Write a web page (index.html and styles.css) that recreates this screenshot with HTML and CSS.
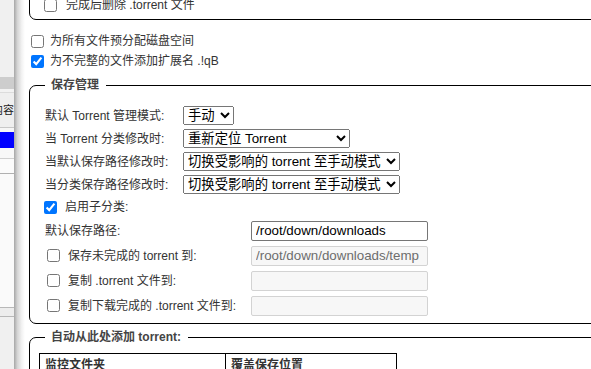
FILE: index.html
```html
<!DOCTYPE html>
<html lang="zh-CN">
<head>
<meta charset="utf-8">
<title>选项</title>
<link rel="stylesheet" href="styles.css">
</head>
<body>
<div class="page">
  <aside class="bgwin">
    <div class="bw-top"></div>
    <div class="bw-head"></div>
    <div class="bw-sep"></div>
    <div class="bw-cell"><span>内容</span></div>
    <div class="bw-line"></div>
    <div class="bw-sel"></div>
    <div class="bw-row"></div>
    <div class="bw-row2"></div>
    <div class="bw-body"></div>
    <div class="bw-foot"></div>
    <div class="bw-rest"></div>
  </aside>
  <div class="shade"></div>
  <main class="main">
    <fieldset class="fs fs1">
      <label class="check-row">
        <input type="checkbox" class="cb cb-in">
        <span class="gap9">完成后删除 .torrent 文件</span>
      </label>
    </fieldset>

    <div class="opts">
      <label class="check-row">
        <input type="checkbox" class="cb cb-out">
        <span class="gap6">为所有文件预分配磁盘空间</span>
      </label>
      <label class="check-row">
        <input type="checkbox" class="cb cb-out" checked>
        <span class="gap6">为不完整的文件添加扩展名 .!qB</span>
      </label>
    </div>

    <fieldset class="fs fs2">
      <legend>保存管理</legend>
      <div class="sel-row">
        <span>默认 Torrent 管理模式:</span>
        <select class="sel sel-s"><option>手动</option><option>自动</option></select>
      </div>
      <div class="sel-row">
        <span>当 Torrent 分类修改时:</span>
        <select class="sel sel-m"><option>重新定位 Torrent</option><option>切换 torrent 至手动模式</option></select>
      </div>
      <div class="sel-row">
        <span>当默认保存路径修改时:</span>
        <select class="sel sel-l"><option>切换受影响的 torrent 至手动模式</option><option>重新定位受影响的 torrent</option></select>
      </div>
      <div class="sel-row">
        <span>当分类保存路径修改时:</span>
        <select class="sel sel-l"><option>切换受影响的 torrent 至手动模式</option><option>重新定位受影响的 torrent</option></select>
      </div>
      <label class="check-row sub-row">
        <input type="checkbox" class="cb cb-sub" checked>
        <span class="gap8">启用子分类:</span>
      </label>
      <div class="path-row">
        <span>默认保存路径:</span>
        <input type="text" class="path" value="/root/down/downloads">
      </div>
      <div class="path-row">
        <label class="check-row">
          <input type="checkbox" class="cb cb-nest">
          <span class="gap8">保存未完成的 torrent 到:</span>
        </label>
        <input type="text" class="path" value="/root/down/downloads/temp" disabled>
      </div>
      <div class="path-row">
        <label class="check-row">
          <input type="checkbox" class="cb cb-nest">
          <span class="gap8">复制 .torrent 文件到:</span>
        </label>
        <input type="text" class="path" value="" disabled>
      </div>
      <div class="path-row">
        <label class="check-row">
          <input type="checkbox" class="cb cb-nest">
          <span class="gap8">复制下载完成的 .torrent 文件到:</span>
        </label>
        <input type="text" class="path" value="" disabled>
      </div>
    </fieldset>

    <fieldset class="fs fs3">
      <legend>自动从此处添加 torrent:</legend>
      <table class="watch">
        <thead>
          <tr><th class="c1">监控文件夹</th><th class="c2">覆盖保存位置</th></tr>
        </thead>
        <tbody>
          <tr><td class="c1">&nbsp;</td><td class="c2">&nbsp;</td></tr>
        </tbody>
      </table>
    </fieldset>
  </main>
</div>
</body>
</html>
```

FILE: styles.css
```css
html, body {
  margin: 0;
  padding: 0;
  background: #fff;
  overflow: hidden;
}
body {
  font-family: "Liberation Sans", "Noto Sans CJK SC", sans-serif;
  font-size: 12px;
  line-height: 16px;
  color: #333;
}
.page {
  display: flex;
  height: 369px;
}

/* background window peeking out on the left */
.bgwin {
  width: 14px;
  flex: none;
  display: flex;
  flex-direction: column;
  overflow: hidden;
  background: #f0f0f0;
}
.bw-top { height: 77px; background: #f0f0f0; }
.bw-head { height: 12px; background: #cdcdcd; }
.bw-sep { height: 4px; background: #f2f2f2; border-bottom: 1px solid #dcdcdc; box-sizing: border-box; }
.bw-cell {
  height: 34px;
  display: flex;
  align-items: center;
  justify-content: flex-end;
  white-space: nowrap;
  color: #222;
  background: #efefef;
  font-size: 11px;
  overflow: hidden;
}
.bw-cell span {
  flex: none;
}
.bw-line { height: 5px; border-top: 1px solid #c8c8c8; background: #f6f6f6; box-sizing: border-box; }
.bw-sel { height: 16px; background: #0000ff; }
.bw-row { height: 10px; background: #f8f8f8; border-bottom: 1px solid #d0d0d0; }
.bw-row2 { height: 14px; background: #fbfbfb; border-bottom: 1px solid #b0b0b0; }
.bw-body { height: 133px; background: #fafafa; border-bottom: 1px solid #b8b8b8; }
.bw-foot { height: 8px; background: #ededed; border-bottom: 1px solid #b8b8b8; }
.bw-rest { flex: 1; background: #f0f0f0; }

.shade {
  width: 11px;
  flex: none;
  background: linear-gradient(to right, #a6a6a6, #d4d4d4 30%, #f2f2f2 70%, #fff);
}

.main {
  flex: none;
  width: 640px;
  padding-left: 4px;
}

/* fieldsets */
.fs {
  margin: 0;
  border: 1px solid #000;
  border-radius: 7px;
  min-width: 0;
}
.fs legend {
  padding: 0 7px 0 6px;
  font-weight: bold;
  color: #444;
  line-height: 16px;
}
.fs1 {
  margin-top: -11px;
  padding: 5px 14px 4px 14px;
}
.fs2 {
  margin-top: 6px;
  padding: 11px 14px 5px 15px;
}
.fs3 {
  margin-top: 5px;
  padding: 8px 14px 20px 9px;
}
.fs3 legend {
  margin-left: 6px;
}

/* check rows */
.check-row {
  display: flex;
  align-items: center;
  height: 20px;
  white-space: nowrap;
}
.cb {
  margin: 0;
  width: 13px;
  height: 13px;
  flex: none;
}
.cb-out { margin-left: 2px; }
.cb-sub { margin-left: -1px; }
.cb-nest { margin-left: 2px; }
.gap6 { margin-left: 6px; }
.gap8 { margin-left: 8px; }
.gap9 { margin-left: 9px; }

.opts {
  margin-top: 11px;
}

/* select rows */
.sel-row {
  display: grid;
  grid-template-columns: 138px auto;
  align-items: center;
  height: 23px;
  white-space: nowrap;
}
.sel {
  justify-self: start;
  height: 19px;
  margin: 0;
  font-family: "Liberation Sans", "Noto Sans CJK SC", sans-serif;
  font-size: 13.33px;
  color: #000;
}
.sel-s { width: 51px; }
.sel-m { width: 167px; }
.sel-l { width: 217px; }

.sub-row {
  height: 22px;
}

/* path rows */
.path-row {
  display: grid;
  grid-template-columns: 206px 177px;
  align-items: center;
  height: 25px;
  white-space: nowrap;
}
.path {
  box-sizing: border-box;
  width: 177px;
  height: 20px;
  margin: 0;
  padding: 0 4px;
  border: 1px solid #767676;
  border-radius: 2px;
  background: #fff;
  font-family: "Liberation Sans", sans-serif;
  font-size: 13.33px;
  color: #000;
}
.path:disabled {
  border-color: #d3d3d3;
  background: #f7f7f7;
  color: #6d6d6d;
}

/* watched folders table */
.watch {
  border-collapse: collapse;
  border: 1px solid #000;
}
.watch th,
.watch td {
  border: 1px solid #000;
  padding: 3px 5px;
  text-align: left;
  font-weight: bold;
  color: #333;
  line-height: 16px;
}
.watch .c1 { width: 175px; }
.watch .c2 { width: 160px; }
```
